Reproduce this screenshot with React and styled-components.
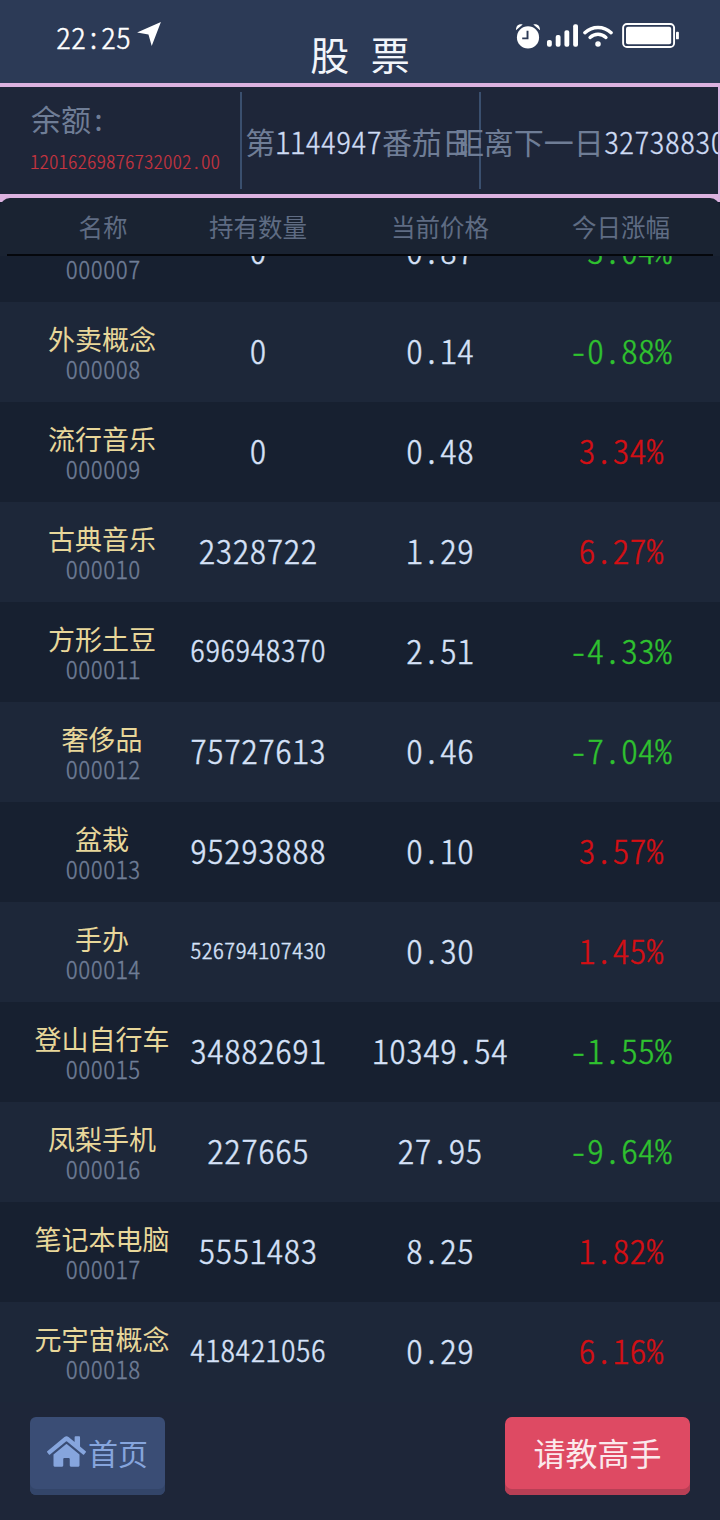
import React from "react";
import styled, { createGlobalStyle } from "styled-components";
import { FaHome } from "react-icons/fa";

const Global = createGlobalStyle`
  html, body { margin: 0; padding: 0; background: #1e2639; }
  body { font-family: "Noto Sans CJK SC", "Noto Sans", sans-serif; font-feature-settings: "hwid" 1; }
  * { box-sizing: border-box; }
`;

const Page = styled.div`
  width: 720px; height: 1520px; display: flex; flex-direction: column; overflow: hidden; position: relative;
  background: #1e2639;
`;
const TopBar = styled.header`
  height: 83px; flex: none; position: relative; background: #2c3a56; display: flex; justify-content: center; align-items: flex-end;
`;
const Title = styled.h1`
  margin: 0; font-size: 39px; line-height: 56px; font-weight: 400; color: #f2f5fa; word-spacing: 13px;
  font-feature-settings: normal; white-space: pre; transform: translateY(-2px);
`;
const Status = styled.div`
  position: absolute; left: 56px; right: 40px; top: 18px; height: 36px; display: flex; justify-content: space-between; align-items: center; color: #fff;
`;
const Time = styled.div`
  display: flex; align-items: center; gap: 5px; font-size: 30px; line-height: 36px; font-weight: 300; -webkit-text-stroke: 0.4px currentColor;
  svg { margin-top: -4px; }
`;
const StatusIcons = styled.div`
  display: flex; align-items: center; gap: 5px; margin-top: -1px;
`;
const InfoBar = styled.section`
  height: 115px; flex: none; display: flex; background: #1e2639; border: solid #dcb2e0; border-width: 4px 2px 4px 0; overflow: hidden;
  padding: 5px 0;
`;
const BalanceCell = styled.div`
  width: 240px; flex: none; display: flex; flex-direction: column; padding: 6px 0 0 31px;
`;
const BalanceLabel = styled.div`
  font-size: 30px; line-height: 40px; color: #6f7d96;
`;
const BalanceValue = styled.div`
  font-size: 19px; line-height: 28px; color: #c73540; margin: 9px 0 0 -1px; white-space: nowrap; font-weight: 300; -webkit-text-stroke: 0.2px currentColor;
`;
const InfoCell = styled.div`
  width: 239px; flex: none; display: flex; align-items: center; justify-content: center; white-space: nowrap; padding-right: 4px;
  border-left: 2px solid #3a4f6e; font-size: 30px; color: #6f7d96;
`;
const Digits = styled.span`
  color: #cfdcf5; font-size: 30.5px; font-weight: 300; -webkit-text-stroke: 0.3px currentColor;
`;
const ListWrap = styled.main`
  flex: 1; position: relative; overflow: hidden; padding-top: 4px; background: #dcb2e0;
  min-height: 0;
`;
const TableHead = styled.div`
  position: absolute; left: 0; right: 0; top: 0; height: 58px; padding: 0 7px; background: #1a2332;
  border-radius: 10px 10px 0 0; z-index: 2;
`;
const HeadRow = styled.div`
  height: 58px; display: grid; grid-template-columns: 192px 118px 246px 116px; align-items: center; border-bottom: 2px solid #05070c;
  text-align: center; font-size: 24.5px; color: #5f6c83;
`;
const Row = styled.div`
  height: 100px; display: grid; grid-template-columns: 192px 118px 246px 116px; padding-left: 7px; align-items: center; text-align: center;
  background: ${p => (p.$dark ? "#172030" : "#1d2739")};
  font-size: 34px; font-weight: 300; color: #d6e2f8; -webkit-text-stroke: 0.4px currentColor;
`;
const NameCell = styled.div`
  display: flex; flex-direction: column; align-items: center; font-weight: 400; -webkit-text-stroke: 0;
`;
const Name = styled.div`
  font-size: 27px; line-height: 33px; height: 31px; color: #e8d79a; white-space: nowrap; margin-right: 2px;
`;
const Code = styled.div`
  font-size: 25px; line-height: 30px; color: #6f7d96; font-weight: 300; -webkit-text-stroke: 0.3px currentColor;
`;
const Qty = styled.div`
  font-size: ${p => p.$size}px; white-space: nowrap; display: flex; justify-content: center; padding-bottom: 6px;
`;
const Price = styled.div`
  white-space: nowrap; padding-bottom: 6px;
`;
const Pct = styled.div`
  color: ${p => (p.$up ? "#d40f14" : "#2fc22f")}; white-space: nowrap; display: flex; justify-content: center; padding-bottom: 6px;
`;
const Footer = styled.footer`
  height: 118px; flex: none; display: flex; justify-content: space-between; align-items: flex-start; padding: 15px 30px 0; background: #1e2639;
`;
const Button = styled.button`
  height: 78px; border: none; border-radius: 7px; font-family: inherit; font-feature-settings: inherit; display: flex; align-items: center; justify-content: center; padding: 0 0 9px;
`;
const HomeButton = styled(Button)`
  width: 135px; gap: 2px; background: #3a4d75; box-shadow: inset 0 -6px 0 #334569; color: #86a5dd; font-size: 30px; border-radius: 6px;
`;
const AskButton = styled(Button)`
  width: 185px; background: #de4a63; box-shadow: inset 0 -6px 0 #b83f55; color: #fbe9ec; font-size: 32px;
`;

const rows = [
  ["", "000007", "0", "0.87", "-3.04%"],
  ["外卖概念", "000008", "0", "0.14", "-0.88%"],
  ["流行音乐", "000009", "0", "0.48", "3.34%"],
  ["古典音乐", "000010", "2328722", "1.29", "6.27%"],
  ["方形土豆", "000011", "696948370", "2.51", "-4.33%"],
  ["奢侈品", "000012", "75727613", "0.46", "-7.04%"],
  ["盆栽", "000013", "95293888", "0.10", "3.57%"],
  ["手办", "000014", "526794107430", "0.30", "1.45%"],
  ["登山自行车", "000015", "34882691", "10349.54", "-1.55%"],
  ["凤梨手机", "000016", "227665", "27.95", "-9.64%"],
  ["笔记本电脑", "000017", "5551483", "8.25", "1.82%"],
  ["元宇宙概念", "000018", "418421056", "0.29", "6.16%"],
];

const qtySize = q => (q.length >= 12 ? 22.6 : q.length >= 9 ? 30.2 : 34);

const Arrow = () => (
  <svg width="26" height="26" viewBox="0 0 24 24"><path d="M23 1 L1 10.5 L11.5 12.5 L14.5 23 Z" fill="#fff" /></svg>
);
const Alarm = () => (
  <svg width="26" height="28" viewBox="0 0 27 28">
    <path d="M1 8 C1 3 4 1 8 2 Z M26 8 C26 3 23 1 19 2 Z" fill="#fff" />
    <circle cx="13.5" cy="15.5" r="11.5" fill="#fff" />
    <path d="M13 8.5 V16.5 H7.5" fill="none" stroke="#2c3a56" strokeWidth="2" />
  </svg>
);
const Signal = () => (
  <svg width="32" height="24" viewBox="0 0 33 24" fill="#fff">
    <rect x="1" y="16" width="5" height="7" rx="2" />
    <rect x="10" y="11" width="5" height="12" rx="2" />
    <rect x="19" y="6" width="5" height="17" rx="2" />
    <rect x="28" y="0" width="5" height="23" rx="2" />
  </svg>
);
const WifiIcon = styled.svg`
  margin-right: 4px;
`;
const Wifi = () => (
  <WifiIcon width="30" height="24" viewBox="0 0 32 24" fill="none" stroke="#fff" strokeWidth="3.6" strokeLinecap="round">
    <path d="M2 8.5 C10 1 22 1 30 8.5" />
    <path d="M7.5 13.5 C12.5 9 19.5 9 24.5 13.5" />
    <circle cx="16" cy="20.5" r="2.2" fill="#fff" strokeWidth="1.5" />
  </WifiIcon>
);
const Battery = () => (
  <svg width="58" height="25" viewBox="0 0 60 26">
    <rect x="1" y="1" width="53" height="24" rx="4" fill="none" stroke="#fff" strokeWidth="2" />
    <rect x="4" y="4" width="47" height="18" rx="2" fill="#fff" />
    <rect x="56" y="9" width="3" height="8" rx="1" fill="#fff" />
  </svg>
);

export default function App() {
  return (
    <Page>
      <Global />
      <TopBar>
        <Status>
          <Time>22:25<Arrow /></Time>
          <StatusIcons><Alarm /><Signal /><Wifi /><Battery /></StatusIcons>
        </Status>
        <Title>股 票</Title>
      </TopBar>
      <InfoBar>
        <BalanceCell>
          <BalanceLabel>余额:</BalanceLabel>
          <BalanceValue>12016269876732002.00</BalanceValue>
        </BalanceCell>
        <InfoCell>第<Digits>1144947</Digits>番茄日</InfoCell>
        <InfoCell>距离下一日<Digits>327388300</Digits></InfoCell>
      </InfoBar>
      <ListWrap>
        <div>
          {rows.map((r, i) => (
            <Row key={r[1]} $dark={i % 2 === 0}>
              <NameCell><Name>{r[0]}</Name><Code>{r[1]}</Code></NameCell>
              <Qty $size={qtySize(r[2])}>{r[2]}</Qty>
              <Price>{r[3]}</Price>
              <Pct $up={!r[4].startsWith("-")}>{r[4]}</Pct>
            </Row>
          ))}
        </div>
        <TableHead>
          <HeadRow>
            <span>名称</span><span>持有数量</span><span>当前价格</span><span>今日涨幅</span>
          </HeadRow>
        </TableHead>
      </ListWrap>
      <Footer>
        <HomeButton><FaHome size={39} />首页</HomeButton>
        <AskButton>请教高手</AskButton>
      </Footer>
    </Page>
  );
}
